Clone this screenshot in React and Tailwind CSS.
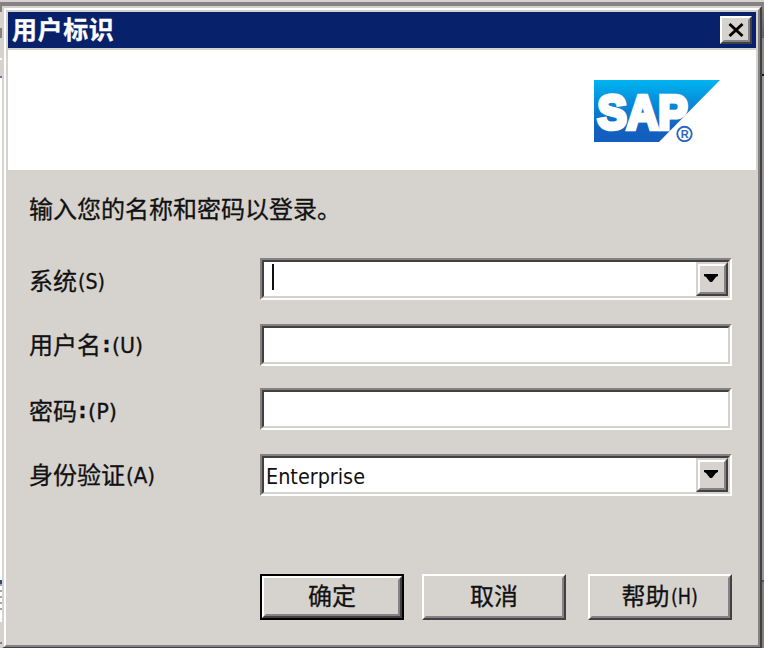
import React from 'react';

const raised = 'border-2 border-t-white border-l-white border-r-[#424142] border-b-[#424142]';
const latin = "'DejaVu Sans Condensed','DejaVu Sans',sans-serif";

function Glyphs({ children, className = '' }) {
  return <span className={`block whitespace-nowrap ${className}`}>{children}</span>;
}

function Latin({ children, width }) {
  return (
    <svg className="shrink-0 overflow-visible" width={width} height="30">
      <text x="1" y="24" textLength={width - 2} lengthAdjust="spacingAndGlyphs" fontSize="21.5" fontFamily={latin} fill="#111" stroke="#111" strokeWidth="0.3">
        {children}
      </text>
    </svg>
  );
}

function DropButton() {
  return (
    <div className="h-[34px] w-8 shrink-0 border-2 border-t-[#d6d3ce] border-l-[#d6d3ce] border-r-[#424142] border-b-[#424142]">
      <div className="flex h-full items-start justify-center border-2 border-t-white border-l-white border-r-[#848284] border-b-[#848284] bg-[#d6d3ce] pt-[7px]">
        <svg className="-ml-[2px] shrink-0" width="16" height="10" viewBox="0 0 16 10">
          <path d="M1 1H15V3L13 4L9 9H7L3 4L1 3Z" fill="#000" />
        </svg>
      </div>
    </div>
  );
}

function Field({ children, dropdown }) {
  return (
    <div className="h-[42px] w-[472px] border-2 border-t-[#848284] border-l-[#848284] border-r-white border-b-white">
      <div
        className={`flex h-full justify-between border-2 border-t-[#424142] border-l-[#424142] border-b-[#d6d3ce] bg-white ${
          dropdown ? 'border-r-[#d6d3ce]' : 'border-r-[#d6d3ce]'
        }`}
      >
        <div className="flex min-w-0 flex-1">{children}</div>
        {dropdown && <DropButton />}
      </div>
    </div>
  );
}

function Row({ label, colon, paren, width, className, labelClass, ...field }) {
  return (
    <div className={`flex ${className}`}>
      <label className={`flex h-[42px] w-[231px] shrink-0 items-start ${labelClass}`}>
        <Glyphs>{label}</Glyphs>
        {colon && (
          <span className="block w-[10px] pt-px pl-px text-center font-['DejaVu_Sans_Condensed','DejaVu_Sans',sans-serif] text-[22px] leading-[30px] font-bold">:</span>
        )}
        <Latin width={width}>{paren}</Latin>
      </label>
      <Field {...field} />
    </div>
  );
}

function Button({ children, isDefault }) {
  return (
    <button className={`block h-[46px] w-36 bg-[#d6d3ce] ${isDefault ? 'border-2 border-black' : ''}`}>
      <div className={`h-full ${raised}`}>
        <div className="flex h-full items-center justify-center border-2 border-t-[#d6d3ce] border-l-[#d6d3ce] border-r-[#848284] border-b-[#848284] pb-1">
          {children}
        </div>
      </div>
    </button>
  );
}

function Logo() {
  return (
    <svg width="126" height="62" viewBox="0 0 126 62">
      <defs>
        <linearGradient id="sap" x1="0" y1="0" x2="0" y2="1">
          <stop offset="0" stopColor="#00b5f1" />
          <stop offset="0.4" stopColor="#0788d8" />
          <stop offset="0.75" stopColor="#1261c0" />
          <stop offset="1" stopColor="#145dbd" />
        </linearGradient>
      </defs>
      <path d="M0 0H126L65 62H0Z" fill="url(#sap)" />
      <text x="3.5" y="48.5" textLength="90" lengthAdjust="spacingAndGlyphs" fontSize="49" fontWeight="700" fontFamily="'Liberation Sans',sans-serif" fill="#fff" stroke="#fff" strokeWidth="4.4">
        SAP
      </text>
      <circle cx="90.5" cy="54" r="7.2" fill="none" stroke="#2b66c2" strokeWidth="1.9" />
      <text x="90.8" y="58" textAnchor="middle" fontSize="11" fontWeight="700" fontFamily="'Liberation Sans',sans-serif" fill="#2b66c2">
        R
      </text>
    </svg>
  );
}

function LeftSliver() {
  return (
    <div className="flex w-[2px] shrink-0 flex-col bg-[#d6d3ce]">
      <div className="h-[6px] bg-[#848284]" />
      <div className="mt-4 h-[10px] bg-[#848284]" />
      <div className="mt-5 h-[2px] bg-white" />
      <div className="mt-4 h-[2px] bg-[#7774a0]" />
      <div className="h-[502px] bg-white" />
      <div className="h-1 bg-[#294a7d]" />
      {[0, 1, 2, 3, 4].map((i) => (
        <div key={i} className="h-[6px] border-t-2 border-t-[#a3a5ac] bg-white" />
      ))}
      <div className="h-2 bg-white" />
      <div className="mt-5 h-[2px] bg-[#848284]" />
    </div>
  );
}

function RightSliver() {
  return (
    <div className="flex w-[2px] shrink-0 flex-col bg-[#99999b]">
      <div className="h-8 bg-gradient-to-b from-[#848284] to-[#626062]" />
      <div className="h-9 bg-[#8d8b88]" />
      <div className="h-[2px] bg-[#171438]" />
      <div className="h-[504px]" />
      <div className="h-[2px] bg-[#555276]" />
      <div className="flex-1 bg-[#85807a]" />
    </div>
  );
}

export default function App() {
  return (
    <div className="flex h-[648px] w-[764px] flex-col overflow-hidden bg-[#848284] font-['Noto_Sans_CJK_SC','Noto_Sans',sans-serif] text-[24px] leading-[30px] text-[#111] [-webkit-text-stroke:0.3px]">
      <div className="h-[2px] shrink-0 bg-[#d6d3ce]" />
      <div className="h-1 shrink-0 bg-[#848284]" />
      <div className="flex min-h-0 flex-1">
        <LeftSliver />
        <div className="w-[760px] shrink-0 border-t-2 border-r-2 border-b border-l-2 border-t-[#d6d3ce] border-r-[#424142] border-b-[#424142] border-l-[#d6d3ce]">
          <div className="h-full border-2 border-t-white border-r-[#848284] border-b-[#848284] border-l-white bg-[#d6d3ce] px-[2px] pt-[2px]">
            <header className="flex h-9 items-start justify-between bg-[#08216b] pt-1 pr-1 pl-1">
              <Glyphs className="-mt-[3px] text-[25px] leading-[30px] font-bold tracking-[0.6px] text-white">用户标识</Glyphs>
              <div className={`h-7 w-8 bg-[#d6d3ce] ${raised}`}>
                <div className="flex h-full items-center justify-center border-2 border-t-[#d6d3ce] border-l-[#d6d3ce] border-r-[#848284] border-b-[#848284]">
                  <svg className="-mt-px shrink-0" width="18" height="16" viewBox="0 0 18 16">
                    <path d="M2.5 2L15.5 14M15.5 2L2.5 14" stroke="#000" strokeWidth="3" fill="none" />
                  </svg>
                </div>
              </div>
            </header>
            <div className="mt-[2px] flex h-[120px] justify-end bg-white pt-[30px] pr-9">
              <Logo />
            </div>
            <main className="pl-[21px]">
              <Glyphs className="pt-[23px]">输入您的名称和密码以登录。</Glyphs>
              <Row className="mt-[35px]" labelClass="pt-[7px]" label="系统" paren="(S)" width={29} dropdown>
                <div className="mt-[2px] ml-2 h-[26px] w-[2px] bg-[#111]" />
              </Row>
              <Row className="mt-6" labelClass="pt-[5px]" label="用户名" colon paren="(U)" width={33} />
              <Row className="mt-[22px]" labelClass="pt-[7px]" label="密码" colon paren="(P)" width={31} />
              <Row className="mt-6" labelClass="pt-[5px]" label="身份验证" paren="(A)" width={31} dropdown>
                <svg width="110" height="34">
                  <text x="2" y="26" textLength="99" lengthAdjust="spacingAndGlyphs" fontSize="21.5" fontFamily={latin} fill="#111">
                    Enterprise
                  </text>
                </svg>
              </Row>
              <div className="mt-[78px] flex pl-[231px]">
                <Button isDefault>确定</Button>
                <div className="w-[18px]" />
                <Button>取消</Button>
                <div className="w-[22px]" />
                <Button>
                  <Glyphs>帮助</Glyphs>
                  <Latin width={29}>(H)</Latin>
                </Button>
              </div>
            </main>
          </div>
        </div>
        <RightSliver />
      </div>
    </div>
  );
}
